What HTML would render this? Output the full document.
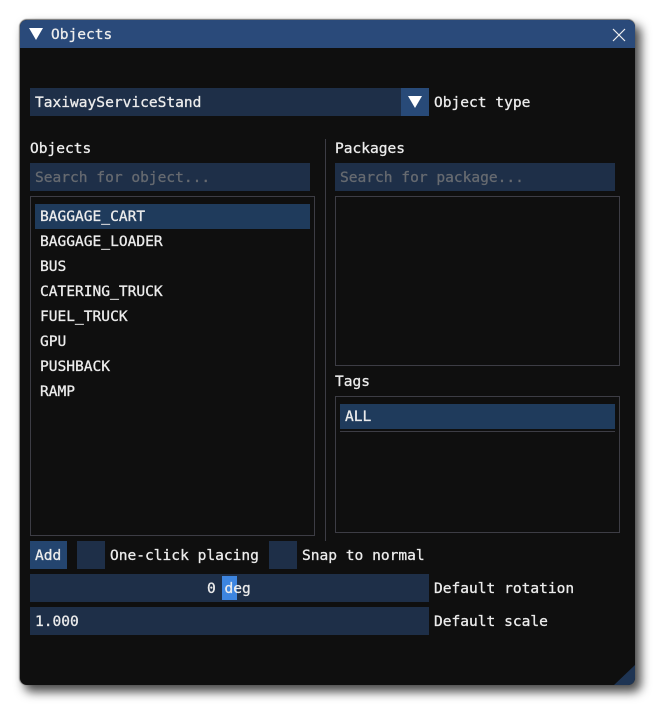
<!DOCTYPE html>
<html>
<head>
<meta charset="utf-8">
<style>
html,body{margin:0;padding:0;background:#fff;}
body{width:655px;height:706px;position:relative;overflow:hidden;font-family:"DejaVu Sans Mono","Liberation Mono",monospace;font-size:14.55px;color:#ececec;}
.win{position:absolute;left:20px;top:20px;width:615px;height:665px;background:#0f0f0f;border-radius:7px;box-shadow:0 -1px 1px 0 rgba(70,70,70,.7),-1px 0 1px 0 rgba(70,70,70,.6),5px 6px 10px 1px rgba(0,0,0,.7);overflow:hidden;}
.a{position:absolute;white-space:pre;line-height:20px;height:20px;margin-top:1px;-webkit-text-stroke:.3px currentColor;}
.b{position:absolute;}
.f{background:#1e2f48;}
.box{position:absolute;border:1px solid #3d3d45;box-sizing:border-box;}
.sel{background:#1f3b5c;}
.ph{color:#666a70;}
</style>
</head>
<body>
<div class="win">
  <div class="b" style="left:0;top:0;width:615px;height:28px;background:#2a4a7a"></div>
  <svg class="b" style="left:0;top:0" width="615" height="665">
    <polygon points="9,8 23,8 16,20" fill="#fff"/>
    <path d="M593,9 L605,21 M605,9 L593,21" stroke="#f0f0f0" stroke-width="1.2" fill="none"/>
    <polygon points="615,645 615,665 594,665" fill="#1e3453"/>
  </svg>
  <div class="a" style="left:31px;top:4px">Objects</div>
</div>

<div class="b f" style="left:30px;top:88px;width:371px;height:28px"></div>
<div class="b" style="left:401px;top:88px;width:28px;height:28px;background:#284a78"></div>
<svg class="b" style="left:401px;top:88px" width="28" height="28"><polygon points="7,8 21,8 14,20" fill="#fff"/></svg>
<div class="a" style="left:35px;top:92px">TaxiwayServiceStand</div>
<div class="a" style="left:434px;top:92px">Object type</div>

<div class="a" style="left:30px;top:138px">Objects</div>
<div class="b f" style="left:30px;top:163px;width:280px;height:28px"></div>
<div class="a ph" style="left:35px;top:167px">Search for object...</div>

<div class="box" style="left:30px;top:196px;width:285px;height:340px"></div>
<div class="b sel" style="left:35px;top:204px;width:275px;height:25px"></div>
<div class="a" style="left:40px;top:206px">BAGGAGE_CART</div>
<div class="a" style="left:40px;top:231px">BAGGAGE_LOADER</div>
<div class="a" style="left:40px;top:256px">BUS</div>
<div class="a" style="left:40px;top:281px">CATERING_TRUCK</div>
<div class="a" style="left:40px;top:306px">FUEL_TRUCK</div>
<div class="a" style="left:40px;top:331px">GPU</div>
<div class="a" style="left:40px;top:356px">PUSHBACK</div>
<div class="a" style="left:40px;top:381px">RAMP</div>

<div class="b" style="left:325px;top:139px;width:1px;height:402px;background:#3d3d45"></div>

<div class="a" style="left:335px;top:138px">Packages</div>
<div class="b f" style="left:335px;top:163px;width:280px;height:28px"></div>
<div class="a ph" style="left:340px;top:167px">Search for package...</div>
<div class="box" style="left:335px;top:196px;width:285px;height:170px"></div>

<div class="a" style="left:335px;top:371px">Tags</div>
<div class="box" style="left:335px;top:396px;width:285px;height:137px"></div>
<div class="b sel" style="left:340px;top:404px;width:275px;height:25px"></div>
<div class="b" style="left:340px;top:431px;width:275px;height:1px;background:#3d3d45"></div>
<div class="a" style="left:345px;top:406px">ALL</div>

<div class="b" style="left:30px;top:541px;width:37px;height:28px;background:#24456f"></div>
<div class="a" style="left:35px;top:545px">Add</div>
<div class="b f" style="left:77px;top:541px;width:28px;height:28px"></div>
<div class="a" style="left:110px;top:545px">One-click placing</div>
<div class="b f" style="left:269px;top:541px;width:28px;height:28px"></div>
<div class="a" style="left:302px;top:545px">Snap to normal</div>

<div class="b f" style="left:30px;top:574px;width:399px;height:28px"></div>
<div class="b" style="left:222px;top:576px;width:15px;height:24px;background:#3d85e0"></div>
<div class="a" style="left:207px;top:578px">0 deg</div>
<div class="a" style="left:434px;top:578px">Default rotation</div>

<div class="b f" style="left:30px;top:607px;width:399px;height:28px"></div>
<div class="a" style="left:35px;top:611px">1.000</div>
<div class="a" style="left:434px;top:611px">Default scale</div>
</body>
</html>
